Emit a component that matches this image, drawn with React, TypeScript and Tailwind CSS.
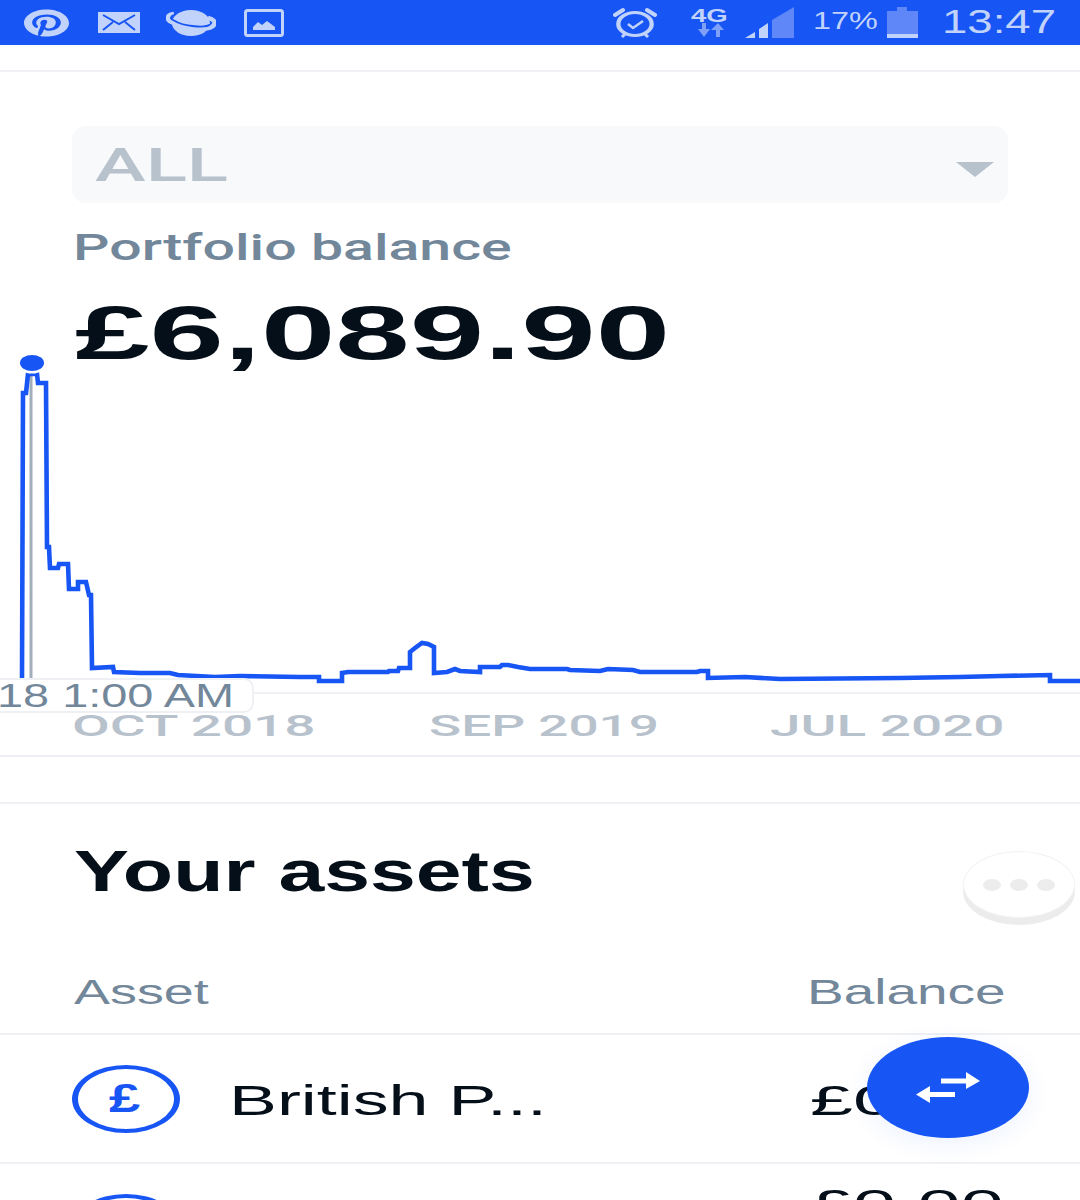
import React from "react";
import { FaPinterest } from "react-icons/fa";

const ic = "#c2d3fb";
const sans = "font-['Liberation_Sans',Arial,sans-serif]";
const med = "font-['Roboto',Arial,sans-serif]";
const points =
  "22,678 23,393 26,393 28,374 37,374 38,383 46,383 47,547 49,547 50,568 58,568 59,564 68,564 69,589 78,589 78,582 86,582 89,595 91,595 92,668 113,667 114,672 140,673 170,673 178,675 215,677 240,676 300,677 319,677 319,681 342,681 342,673 348,672 388,672 389,671 398,671 399,668 410,668 410,652 415,648 422,643 428,644 434,647 434,673 447,672 455,669 460,671 480,672 480,667 500,667 502,665 508,665 518,667 530,669 567,669 570,670 600,671 608,669 633,670 640,672 697,672 700,671 708,671 708,678 745,677 780,679 900,678 960,677 1000,676 1050,675 1050,681 1080,681";

function Wide({ className, children }: { className: string; children: React.ReactNode }) {
  return <span className={`inline-block origin-left whitespace-nowrap leading-none ${className}`}>{children}</span>;
}

function StatusBar() {
  return (
    <div className={`flex h-[45px] items-center bg-[#1755f4] pl-[24px] ${sans}`}>
      <FaPinterest className="h-[28px] w-[45px]" color={ic} preserveAspectRatio="none" />
      <svg className="ml-[29px] h-[21px] w-[42px]" viewBox="0 0 42 21">
        <rect width="42" height="21" fill={ic} />
        <path d="M5 3 L21 12 L37 3 M5 18 L15 10 M37 18 L27 10" stroke="#1755f4" strokeWidth="2" fill="none" />
      </svg>
      <svg className="ml-[26px] h-[28px] w-[50px]" viewBox="0 0 50 28">
        <ellipse cx="25" cy="14" rx="19" ry="13" fill={ic} />
        <path d="M8 5 C0 6 0 11 6 13 C18 21 42 21 47 17 C51 13 47 10 42 9" fill="none" stroke={ic} strokeWidth="4.6" />
        <path d="M9 6 C4 7 4 10 8 11.500 C18 18 40 19 44 15.500" fill="none" stroke="#1755f4" strokeWidth="1.8" />
      </svg>
      <svg className="ml-[28px] h-[28px] w-[40px]" viewBox="0 0 40 28">
        <rect x="1.5" y="1.5" width="37" height="25" rx="2" fill="none" stroke={ic} strokeWidth="3" />
        <path d="M9 21 L9 18 L14 13 L18 16 L23 12 L31 18 L31 21 Z" fill={ic} />
      </svg>
      <svg className="ml-[329px] h-[31px] w-[44px]" viewBox="0 0 44 31">
        <circle cx="22" cy="17" r="11.5" fill="none" stroke={ic} strokeWidth="3" transform="translate(22 17) scale(1.45 1) translate(-22 -17)" />
        <path d="M2 8 L10 3 M42 8 L34 3" stroke={ic} strokeWidth="4" strokeLinecap="round" />
        <path d="M15 17 L20 21 L30 14" fill="none" stroke={ic} strokeWidth="2.5" />
        <path d="M9 30 L12 27 M35 30 L32 27" stroke={ic} strokeWidth="3" />
      </svg>
      <div className="ml-[34px] flex h-[34px] w-[40px] flex-col items-start">
        <Wide className="h-[17px] scale-x-[1.45] text-[19px] font-bold text-[#c2d3fb]">4G</Wide>
        <svg className="ml-[7px] h-[15px] w-[26px]" viewBox="0 0 26 15">
          <path d="M4 0 H8 V6 H12 L6 14 L0 6 H4 Z" fill="#7ea0f8" />
          <path d="M18 14 H22 V7 H26 L20 0 L13 7 H18 Z" fill="#7ea0f8" />
        </svg>
      </div>
      <svg className="ml-[14px] h-[31px] w-[49px]" viewBox="0 0 49 31">
        <path d="M0 31 L10 25 V31 Z" fill={ic} />
        <path d="M14 31 V22 L23 16 V31 Z" fill={ic} />
        <path d="M27 31 V13 L49 0 V31 Z" fill="#5f87f7" />
      </svg>
      <div className="ml-[19px] w-[74px]">
        <Wide className="scale-x-[1.35] text-[24px] text-[#c2d3fb]">17%</Wide>
      </div>
      <svg className="h-[31px] w-[31px]" viewBox="0 0 31 31">
        <path d="M10 0 H20 V4 H31 V31 H0 V4 H10 Z" fill="#5f87f7" />
        <rect y="27" width="31" height="4" fill={ic} />
      </svg>
      <div className="ml-[24px]">
        <Wide className="scale-x-[1.38] text-[33px] text-[#c2d3fb]">13:47</Wide>
      </div>
    </div>
  );
}

function Chart() {
  return (
    <div className="relative">
      <svg className="block h-[342px] w-[1080px]" viewBox="0 350 1080 342">
        <line x1="31" y1="370" x2="31" y2="678" stroke="#a3aebb" strokeWidth="3" />
        <polyline points={points} fill="none" stroke="#1755f4" strokeWidth="4.6" />
        <ellipse cx="32" cy="363" rx="15" ry="10.5" fill="#fff" />
        <ellipse cx="32" cy="363" rx="12" ry="8" fill="#1755f4" />
      </svg>
      <div className="h-[2px] bg-[#eef0f4]" />
      <div className="absolute left-[-6px] top-[328px] flex h-[35px] w-[260px] items-center overflow-hidden rounded-r-[10px] border-2 border-[#eef0f4] bg-white pl-[1px]">
        <Wide className={`scale-x-[1.42] text-[33px] text-[#73879a] ${sans}`}>18 1:00 AM</Wide>
      </div>
    </div>
  );
}

export default function App() {
  return (
    <div className={`relative h-[1200px] w-[1080px] overflow-hidden bg-white ${sans}`}>
      <StatusBar />
      <div className="h-[27px] border-b-2 border-[#eff1f4]" />

      <div className="mx-[72px] mt-[54px] flex h-[77px] items-center justify-between rounded-[14px] bg-[#f8f9fb] pl-[23px] pr-[14px]">
        <Wide className={`scale-x-[1.66] text-[46px] font-medium text-[#b8c2cd] ${med}`}>ALL</Wide>
        <svg className="mt-[10px] h-[15px] w-[38px]" viewBox="0 0 38 15"><path d="M0 0 H38 L19 15 Z" fill="#b8c2cd" /></svg>
      </div>

      <div className="h-[147px] pl-[73px]">
        <div className="pt-[27px]">
          <Wide className={`scale-x-[1.59] text-[36px] font-medium text-[#73879a] ${med}`}>Portfolio balance</Wide>
        </div>
        <div className="pl-[2px] pt-[28px]">
          <Wide className="scale-x-[1.76] text-[76px] font-bold text-[#050f19]">£6,089.90</Wide>
        </div>
      </div>

      <Chart />

      <div className="flex h-[63px] items-start border-b-2 border-[#eef0f4] pl-[72px] pt-[17px] text-[#b8c2cd]">
        <div className="w-[357px]"><Wide className={`scale-x-[1.83] text-[30px] font-medium ${med}`}>OCT 2018</Wide></div>
        <div className="w-[341px]"><Wide className={`scale-x-[1.77] text-[30px] font-medium ${med}`}>SEP 2019</Wide></div>
        <div><Wide className={`scale-x-[1.83] text-[30px] font-medium ${med}`}>JUL 2020</Wide></div>
      </div>

      <div className="h-[45px]" />

      <div className="border-t-2 border-[#eef0f4]">
        <div className="flex h-[123px] items-start justify-between pl-[74px] pr-[5px] pt-[39px]">
          <div className="h-[41px]"><Wide className="scale-x-[1.445] text-[57px] font-bold text-[#050f19]">Your assets</Wide></div>
          <div className="mt-[8px] flex h-[67px] w-[112px] items-center justify-center gap-[9px] rounded-[50%] border border-[#f2f2f2] bg-white shadow-[0_7px_0_#ececec]">
            <span className="h-[12px] w-[18px] rounded-[50%] bg-[#ececec]" />
            <span className="h-[12px] w-[18px] rounded-[50%] bg-[#ececec]" />
            <span className="h-[12px] w-[18px] rounded-[50%] bg-[#ececec]" />
          </div>
        </div>
        <div className="flex h-[108px] border-b-2 border-[#eef0f4] pl-[74px] pt-[47px] text-[#73879a]">
          <div className="w-[733px]"><Wide className="scale-x-[1.54] text-[35px]">Asset</Wide></div>
          <div><Wide className="scale-x-[1.57] text-[35px]">Balance</Wide></div>
        </div>
        <div className="flex h-[129px] items-center border-b-2 border-[#eef0f4] pl-[72px]">
          <div className="flex h-[68px] w-[108px] items-center justify-center rounded-[50%] border-x-[6px] border-y-4 border-[#1755f4]">
            <span className="mr-[12px]"><Wide className="scale-x-[1.4] text-[40px] font-bold text-[#1755f4]">£</Wide></span>
          </div>
          <div className="ml-[49px] w-[581px] pt-[4px]"><Wide className="scale-x-[1.67] text-[43px] text-[#050f19]">British P...</Wide></div>
          <div className="pt-[4px]"><Wide className="scale-x-[1.8] text-[43px] text-[#050f19]">£0.00</Wide></div>
        </div>
        <div className="flex items-start pl-[72px] pt-[30px]">
          <div className="h-[68px] w-[108px] rounded-[50%] border-x-[6px] border-y-4 border-[#1755f4]" />
          <div className="ml-[49px] w-[581px]" />
          <div className="-mt-[11px]"><Wide className="scale-x-[1.8] text-[43px] text-[#050f19]">£0.00</Wide></div>
        </div>
      </div>

      <div className="absolute left-[867px] top-[1037px] flex h-[101px] w-[162px] items-center justify-center rounded-[50%] bg-[#1755f4] shadow-[0_6px_24px_rgba(23,85,244,0.08)]">
        <svg className="h-[32px] w-[64px]" viewBox="916 1072 64 32">
          <path d="M941 1078.5 H966 V1072 L980 1081 L966 1089 V1083.5 H941 Z" fill="#fff" />
          <path d="M955 1092 H930 V1086 L916 1094.500 L930 1103 V1097 H955 Z" fill="#fff" />
        </svg>
      </div>
    </div>
  );
}
